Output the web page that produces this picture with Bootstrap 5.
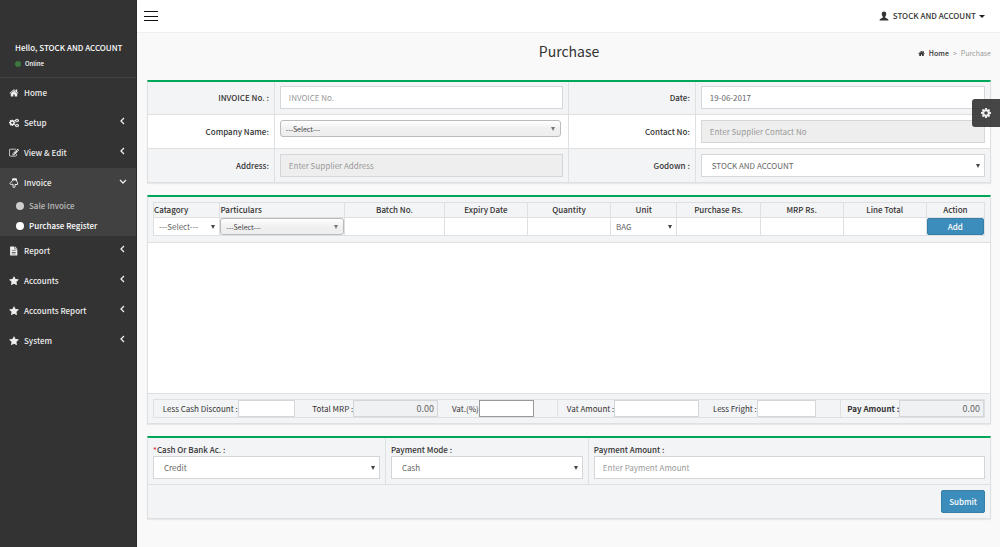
<!DOCTYPE html>
<html lang="en">
<head>
<meta charset="utf-8">
<meta name="viewport" content="width=device-width, initial-scale=1">
<title>Purchase</title>
<link href="https://cdn.jsdelivr.net/npm/bootstrap@5.3.0/dist/css/bootstrap.min.css" rel="stylesheet">
<style>
:root{--line:#dfe0e2;--pale:#f3f4f5;--green:#00a65a;--ink:#333}
body{font-family:"Noto Sans CJK SC","Source Sans Pro",sans-serif;font-size:8px;line-height:12px;color:var(--ink);background:#f9f9f9}
a{color:inherit;text-decoration:none}
svg.ico{fill:currentColor;flex:none;width:10px;height:10px}
/* sidebar */
.side{width:137px;flex:none;background:#333;color:#eee;border-right:1px solid #2b2b2b}
.who{padding:42px 0 7px 15px;border-bottom:1px solid #414141;font-weight:500;color:#fff}
.who .online{font-size:6px;margin-top:4px}
.dot{width:6px;height:6px;border-radius:50%;background:#3c763d}
.menu-link{display:flex;align-items:center;height:30px;padding:0 11px 0 9px;font-weight:500}
.menu-link span{margin-left:5px;flex:1}
.menu-link .chev{width:5px;height:8px;margin-bottom:4px;fill:none;stroke:currentColor;stroke-width:1.3}
.menu-link .chev.down{width:8px;height:5px;margin-right:-2px}
.opened{background:#414141}
.submenu{margin-top:-2px}
.sub-link{display:flex;align-items:center;height:20px;padding-left:16px;color:#bbb;font-weight:500}
.sub-link i{width:8px;height:8px;border-radius:50%;background:#ccc;margin-right:5px}
.sub-link.active{color:#fff}.sub-link.active i{background:#fff}
/* top bar */
.topbar{height:33px;background:#fff;border-bottom:1px solid #efefef;padding:0 15px 0 7px}
.burger{border:0;background:none;padding:0;width:14px;height:10px;display:flex;flex-direction:column;justify-content:space-between}
.burger i{height:1px;width:14px;background:#111}
.user-menu{border:0;background:none;padding:0;font-weight:500;color:#333}
.user-menu .caret{border:3px solid transparent;border-top-color:#222;border-bottom:0;margin-left:3px}
.page{padding:0 9px 26px 10px}
.heading{height:47px;padding-top:8px;position:relative}
.heading h1{font-size:14px;line-height:20px;font-weight:400;margin:0;text-align:center}
.crumbs{position:absolute;right:0;top:14px;font-size:7px;color:#999;gap:4px}
.crumbs a{color:#333;font-weight:500}
.crumbs svg.ico{width:7px;height:7px;color:#333}
/* panels */
.panel{background:var(--pale);border:1px solid var(--line);border-top:2px solid var(--green);margin-bottom:12px;box-shadow:0 1px 1px #e8e8e8}
table{width:100%;table-layout:fixed;border-collapse:collapse}
.form-grid td,.form-grid th{border:1px solid var(--line);padding:5px;text-align:right;font-weight:500}
.form-grid tr:first-child>*,.pay tr:first-child>*{border-top:0}
.form-grid tr:first-child>*{padding-top:4px}
.form-grid tr>:first-child,.pay tr>:first-child{border-left:0}
.form-grid tr>:last-child,.pay tr>:last-child{border-right:0}
.form-grid tr:last-child>*,.pay tr:last-child>*{border-bottom:0}
.form-grid tr:nth-child(2){background:#fff}
.field{display:block;width:100%;height:23px;border:1px solid #d5d6d9;border-radius:0;background:#fff;color:#666;padding:0 8px;font-size:8px;line-height:12px;outline:0;appearance:none}
.field::placeholder{color:#999;opacity:1}
.field[readonly]{background-color:#eee}
select.field{padding-left:10px;background:#fff url("data:image/svg+xml,%3Csvg xmlns='http://www.w3.org/2000/svg' viewBox='0 0 4 4'%3E%3Cpath fill='%23444' d='M0 0h4L2 4z'/%3E%3C/svg%3E") no-repeat right 4px center/4px 4px}
select.field.chosen{height:17px;padding-left:5px;border-color:#bbb;border-radius:3px;color:#444;font-size:7px;background-image:url("data:image/svg+xml,%3Csvg xmlns='http://www.w3.org/2000/svg' viewBox='0 0 4 4'%3E%3Cpath fill='%23777' d='M0 0h4L2 4z'/%3E%3C/svg%3E"),linear-gradient(#fff,#f0f0f0 50%,#eee);background-size:4px 4px,100% 100%;background-position:right 5px center,0 0}
.company{width:99%!important}
.lines{padding:5px 5px 6px;border-bottom:1px solid var(--line)}
.lines th,.lines td{border:1px solid var(--line);padding:0;text-align:center;font-weight:500}
.lines th{height:15px}
.lines td{height:17px;vertical-align:middle}
.lines td .field{height:17px;border:0}
.lines td select.field{padding-left:5px}
.lines td select.field.chosen{border:1px solid #bbb}
.btn-blue{background:#3c8dbc;border:1px solid #367fa9;color:#fff;border-radius:2px;font-size:8px;line-height:12px;font-weight:500;padding:0 7px;height:23px}
.lines .btn-blue{width:100%;height:17px;display:block}
.empty{height:151px;background:#fff;border-bottom:1px solid var(--line)}
.totals{padding:5px}
.totals-grid{display:grid;grid-template-columns:84fr 58fr 58fr 85fr 41fr 55fr 24fr 57fr 85fr 58fr 59fr 25fr 59fr 85fr;border:1px solid var(--line);align-items:center;height:19px}
.totals-grid label{text-align:right;white-space:nowrap}
.totals-grid .field{height:17px;min-width:0;padding:0 3px;text-align:right;font-size:9px}
.totals-grid .field[readonly]{background:#f0f1f2}
.totals-grid .vat{border-color:#999}
.totals-grid .gap-end{border-right:1px solid var(--line);height:17px}
.pay td{border:1px solid var(--line);padding:5px;font-weight:500}
.pay label{display:block;line-height:12px;margin-top:1px}
.settings{position:fixed;right:0;top:99px;width:28px;height:28px;border:0;border-radius:3px 0 0 3px;background:rgba(50,50,50,.9);color:#eee;padding:0;display:flex;align-items:center;justify-content:center}
</style>
</head>
<body>
<svg width="0" height="0" class="position-absolute" aria-hidden="true">
<symbol id="home" viewBox="0 0 1792 1792"><path d="M1472 992v480q0 26-19 45t-45 19h-384v-384h-256v384h-384q-26 0-45-19t-19-45v-480q0-1 .5-3t.5-3l575-474 575 474q1 2 1 6zm223-69l-62 74q-8 9-21 11h-3q-13 0-21-7l-692-577-692 577q-12 8-24 7-13-2-21-11l-62-74q-8-10-7-23.5t11-21.5l719-599q32-26 76-26t76 26l244 204v-195q0-14 9-23t23-9h192q14 0 23 9t9 23v408l219 182q10 8 11 21.5t-7 23.5z"/></symbol>
<symbol id="star" viewBox="0 0 1792 1792"><path d="M1728 647q0 22-26 48l-363 354 86 500q1 7 1 20 0 21-10.5 35.5t-30.5 14.5q-19 0-40-12l-449-236-449 236q-22 12-40 12-21 0-31.5-14.5t-10.5-35.5q0-6 2-20l86-500-364-354q-25-27-25-48 0-37 56-46l502-73 225-455q19-41 49-41t49 41l225 455 502 73q56 9 56 46z"/></symbol>
<symbol id="cog" viewBox="128 128 1536 1536"><path d="M1152 896q0-106-75-181t-181-75-181 75-75 181 75 181 181 75 181-75 75-181zm512-109v222q0 12-8 23t-20 13l-185 28q-19 54-39 91 35 50 107 138 10 12 10 25t-9 23q-27 37-99 108t-94 71q-12 0-26-9l-138-108q-44 23-91 38-16 136-29 186-7 28-36 28h-222q-14 0-24.5-8.5t-11.5-21.5l-28-184q-49-16-90-37l-141 107q-10 9-25 9-14 0-25-11-126-114-165-168-7-10-7-23 0-12 8-23 15-21 51-66.5t54-70.5q-27-50-41-99l-183-27q-13-2-21-12.5t-8-23.5v-222q0-12 8-23t19-13l186-28q14-46 39-92-40-57-107-138-10-12-10-24 0-10 9-23 26-36 98.5-107.5t94.5-71.5q13 0 26 10l138 107q44-23 91-38 16-136 29-186 7-28 36-28h222q14 0 24.5 8.5t11.5 21.5l28 184q49 16 90 37l142-107q9-9 24-9 13 0 25 10 129 119 165 170 7 8 7 22 0 12-8 23-15 21-51 66.5t-54 70.5q26 50 41 98l183 28q13 2 21 12.5t8 23.5z"/></symbol>
<symbol id="cogs" viewBox="0 0 20 20"><use href="#cog" x="0" y="3" width="13" height="13"/><use href="#cog" x="12" y="1" width="8" height="8"/><use href="#cog" x="12" y="11" width="8" height="8"/></symbol>
<symbol id="edit" viewBox="0 0 1792 1792"><path d="M888 1184l116-116-152-152-116 116v56h96v96h56zm440-720q-16-16-33 1l-350 350q-17 17-1 33t33-1l350-350q17-17 1-33zm80 594v190q0 119-84.5 203.5t-203.5 84.5h-832q-119 0-203.5-84.5t-84.5-203.5v-832q0-119 84.5-203.5t203.5-84.5h832q63 0 117 25 15 7 18 23 3 17-9 29l-49 49q-14 14-32 8-23-6-45-6h-832q-66 0-113 47t-47 113v832q0 66 47 113t113 47h832q66 0 113-47t47-113v-126q0-13 9-22l64-64q15-15 35-7t20 29zm-96-738l288 288-672 672h-288v-288zm444 132l-92 92-288-288 92-92q28-28 68-28t68 28l152 152q28 28 28 68t-28 68z"/></symbol>
<symbol id="hand" viewBox="0 0 20 20"><path fill="none" stroke="currentColor" stroke-width="2" stroke-linejoin="round" d="M7 2h8v4l2 3v4h-5v4q0 2-2 2t-2-2v-5l-3 1q-3 0-3-2l5-6z"/><path d="M7 1h8v4H7z"/></symbol>
<symbol id="file" viewBox="0 0 16 18"><path fill-rule="evenodd" d="M1 1h8v5h5v11H1zM10 1l4 4h-4zM4 8v1h7V8zm0 3v1h7v-1zm0 3v1h7v-1z"/></symbol>
<symbol id="user" viewBox="0 0 18 18"><path d="M9 1c3 0 4 2 4 4.500S12 9 11 10.500c0 2 1 2 3 2.800 2 .8 3 1.400 3 3.700H1c0-2.300 1-2.900 3-3.700 2-.8 3-.8 3-2.800C6 9 5 8 5 5.500S6 1 9 1z"/></symbol>
<symbol id="left" viewBox="0 0 5 8"><path d="M4 1L1 4l3 3"/></symbol>
<symbol id="down" viewBox="0 0 8 5"><path d="M1 1l3 3 3-3"/></symbol>
</svg>
<div class="d-flex min-vh-100">
<aside class="side">
<div class="who"><div>Hello, STOCK AND ACCOUNT</div><a href="#" class="online d-flex align-items-center gap-1"><i class="dot"></i>Online</a></div>
<nav>
<a class="menu-link" href="#"><svg class="ico"><use href="#home"/></svg><span>Home</span></a>
<a class="menu-link" href="#"><svg class="ico"><use href="#cogs"/></svg><span>Setup</span><svg class="chev"><use href="#left"/></svg></a>
<a class="menu-link" href="#"><svg class="ico"><use href="#edit"/></svg><span>View &amp; Edit</span><svg class="chev"><use href="#left"/></svg></a>
<div class="opened">
<a class="menu-link" href="#"><svg class="ico"><use href="#hand"/></svg><span>Invoice</span><svg class="chev down"><use href="#down"/></svg></a>
<div class="submenu">
<a class="sub-link" href="#"><i></i>Sale Invoice</a>
<a class="sub-link active" href="#"><i></i>Purchase Register</a>
</div>
</div>
<a class="menu-link" href="#"><svg class="ico"><use href="#file"/></svg><span>Report</span><svg class="chev"><use href="#left"/></svg></a>
<a class="menu-link" href="#"><svg class="ico"><use href="#star"/></svg><span>Accounts</span><svg class="chev"><use href="#left"/></svg></a>
<a class="menu-link" href="#"><svg class="ico"><use href="#star"/></svg><span>Accounts Report</span><svg class="chev"><use href="#left"/></svg></a>
<a class="menu-link" href="#"><svg class="ico"><use href="#star"/></svg><span>System</span><svg class="chev"><use href="#left"/></svg></a>
</nav>
</aside>
<div class="flex-grow-1">
<header class="topbar d-flex align-items-center justify-content-between">
<button class="burger" type="button" aria-label="Toggle navigation"><i></i><i></i><i></i></button>
<button class="user-menu d-flex align-items-center" type="button"><svg class="ico me-1"><use href="#user"/></svg>STOCK AND ACCOUNT<i class="caret"></i></button>
</header>
<main class="page">
<div class="heading"><h1>Purchase</h1>
<nav class="crumbs d-flex align-items-center" aria-label="breadcrumb"><svg class="ico"><use href="#home"/></svg><a href="#">Home</a><span>&gt;</span><span>Purchase</span></nav></div>
<form>
<section class="panel">
<table class="form-grid"><colgroup><col style="width:15%"><col style="width:35%"><col style="width:15%"><col style="width:35%"></colgroup><tbody>
<tr><th><label for="inv">INVOICE No. :</label></th><td><input class="field" id="inv" placeholder="INVOICE No."></td><th><label for="date">Date:</label></th><td><input class="field" id="date" value="19-06-2017"></td></tr>
<tr><th><label for="comp">Company Name:</label></th><td class="align-top"><select class="field chosen company" id="comp"><option>---Select---</option></select></td><th><label for="cont">Contact No:</label></th><td><input class="field" id="cont" readonly placeholder="Enter Supplier Contact No"></td></tr>
<tr><th><label for="addr">Address:</label></th><td><input class="field" id="addr" readonly placeholder="Enter Supplier Address"></td><th><label for="god">Godown :</label></th><td><select class="field" id="god"><option>STOCK AND ACCOUNT</option></select></td></tr>
</tbody></table>
</section>
<section class="panel">
<div class="lines"><table>
<colgroup><col style="width:8%"><col style="width:15%"><col style="width:12%"><col style="width:10%"><col style="width:10%"><col style="width:8%"><col style="width:10%"><col style="width:10%"><col style="width:10%"><col style="width:7%"></colgroup>
<thead><tr><th class="text-start">Catagory</th><th class="text-start">Particulars</th><th>Batch No.</th><th>Expiry Date</th><th>Quantity</th><th>Unit</th><th>Purchase Rs.</th><th>MRP Rs.</th><th>Line Total</th><th>Action</th></tr></thead>
<tbody><tr>
<td><select class="field" aria-label="Catagory"><option>---Select---</option></select></td>
<td><select class="field chosen" aria-label="Particulars"><option>---Select---</option></select></td>
<td><input class="field" aria-label="Batch No."></td><td><input class="field" aria-label="Expiry Date"></td><td><input class="field" aria-label="Quantity"></td>
<td><select class="field" aria-label="Unit"><option>BAG</option></select></td>
<td><input class="field" aria-label="Purchase Rs."></td><td><input class="field" aria-label="MRP Rs."></td><td><input class="field" aria-label="Line Total"></td>
<td><button type="button" class="btn-blue">Add</button></td>
</tr></tbody></table></div>
<div class="empty"></div>
<div class="totals"><div class="totals-grid">
<label for="lcd">Less Cash Discount :</label><input class="field" id="lcd">
<label for="tm">Total MRP :</label><input class="field" id="tm" readonly value="0.00">
<label for="vat">Vat.(%)</label><input class="field vat" id="vat"><span class="gap-end"></span>
<label for="va">Vat Amount :</label><input class="field" id="va">
<label for="lf">Less Fright :</label><input class="field" id="lf"><span class="gap-end"></span>
<label for="pa" class="fw-bold">Pay Amount :</label><input class="field" id="pa" readonly value="0.00">
</div></div>
</section>
<section class="panel">
<table class="pay"><colgroup><col style="width:28.2%"><col style="width:24.1%"><col></colgroup><tbody>
<tr><td><label for="ac"><span class="text-danger">*</span>Cash Or Bank Ac. :</label><select class="field" id="ac"><option>Credit</option></select></td>
<td><label for="pm">Payment Mode :</label><select class="field" id="pm"><option>Cash</option></select></td>
<td><label for="pam">Payment Amount :</label><input class="field" id="pam" placeholder="Enter Payment Amount"></td></tr>
<tr><td colspan="3" class="text-end"><button type="button" class="btn-blue">Submit</button></td></tr>
</tbody></table>
</section>
</form>
</main>
</div>
</div>
<button class="settings" type="button" aria-label="Settings"><svg class="ico"><use href="#cog"/></svg></button>
<script src="https://cdn.jsdelivr.net/npm/bootstrap@5.3.0/dist/js/bootstrap.bundle.min.js"></script>
</body>
</html>
